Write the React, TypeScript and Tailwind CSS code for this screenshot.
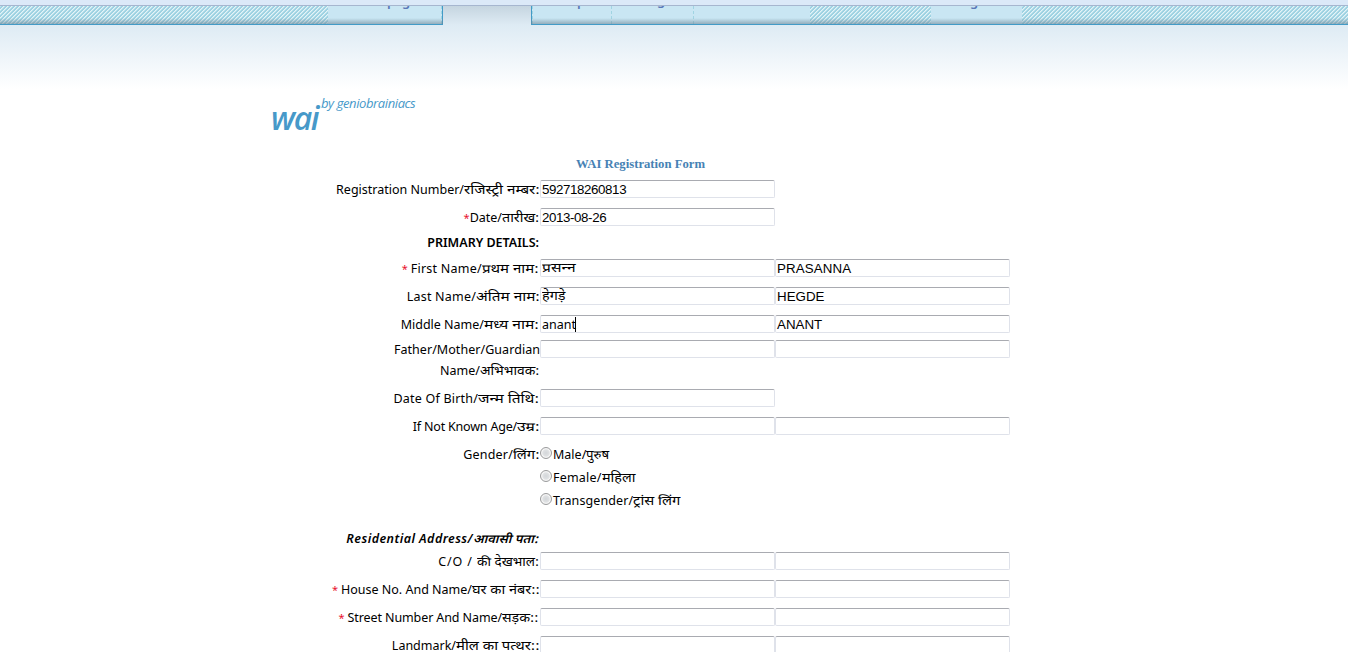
import React from "react";

type Part = { t: string; c?: string; s?: string };

/* Devanagari parts carry a box width (c) and a horizontal stretch (s). */
function Label({ parts, className = "" }: { parts: Part[]; className?: string }) {
  return (
    <span className={`flex whitespace-pre ${className}`}>
      {parts.map((p, i) =>
        p.s ? (
          <span key={i} className={`-mb-[2px] inline-block pt-[2px] ${HI} ${p.c}`}>
            <span className={`inline-block origin-left ${p.s}`}>{p.t}</span>
          </span>
        ) : (
          <span key={i} className={p.c ?? ""}>{p.t}</span>
        )
      )}
    </span>
  );
}

function Field({ value = "", caret = false, className = "", stretch = "" }: { value?: string; caret?: boolean; className?: string; stretch?: string }) {
  return (
    <div className={`flex h-[18px] w-[235px] shrink-0 items-center whitespace-pre rounded-[2px] border border-[#dfe2ea] border-t-[#a9abb1] bg-white pl-px text-black ${className}`}>
      <span className={`inline-block origin-left ${stretch}`}>{value}</span>
      {caret && <span className="-ml-px h-[15px] w-px bg-black" />}
    </div>
  );
}

function Row({ parts, second, children, className = "h-[28px] items-center", label = "" }: { parts: Part[]; second?: Part[]; children?: React.ReactNode; className?: string; label?: string }) {
  return (
    <div className={`flex ${className}`}>
      <div className={`flex w-[540px] shrink-0 flex-col items-end ${label}`}>
        <Label parts={parts} className={second ? "" : "pr-px"} />
        {second && <Label parts={second} className="pr-px" />}
      </div>
      {children}
    </div>
  );
}

const HI = "font-['Noto_Sans_Devanagari','Noto_Sans','Lohit_Devanagari',sans-serif] text-[12px]";
const ARIAL = "font-['Liberation_Sans',Arial,sans-serif] text-[13.33px]";
const DIGITS = `${ARIAL} tracking-[-0.4px]`;
const STAR = "text-[#e8112d] text-[11px]";

function Hatch({ className }: { className: string }) {
  return (
    <svg className={`h-full shrink-0 ${className}`} shapeRendering="crispEdges">
      <defs>
        <pattern id="hatch" width="4" height="4" patternUnits="userSpaceOnUse">
          <rect width="4" height="4" fill="#9ed2e2" />
          <path d="M3 0h1v1h-1zM2 1h1v1h-1zM1 2h1v1h-1zM0 3h1v1h-1z" fill="#e4f4f8" />
          <path d="M0 0h1v1h-1zM3 1h1v1h-1zM2 2h1v1h-1zM1 3h1v1h-1z" fill="#c2e4ee" />
        </pattern>
      </defs>
      <rect width="100%" height="100%" fill="url(#hatch)" />
    </svg>
  );
}

function Cut({ children, className }: { children: string; className: string }) {
  return <span className={`absolute font-['Noto_Sans',sans-serif] text-[13px] leading-[19px] font-semibold text-[#5a78b8] ${className}`}>{children}</span>;
}

function Radio({ parts }: { parts: Part[] }) {
  return (
    <div className="flex h-[23px] items-center">
      <span className="mb-[3px] h-[12px] w-[12px] shrink-0 rounded-full border border-[#9a9b9c] bg-[radial-gradient(circle,#d3d6d9_0,#dfe1e3_45%,#f6f6f6_60%,#e8e8e8_100%)]" />
      <Label parts={parts} className="pl-px" />
    </div>
  );
}

export default function App() {
  return (
    <div className="h-[652px] w-[1348px] overflow-hidden bg-white font-['Noto_Sans',sans-serif] text-[12.5px] leading-[21px] text-black">
      <div className="h-[5px] bg-[#dbe9f8]" />
      <div className="relative flex h-[20px] overflow-hidden border-t border-[#a6b6cf] bg-[#c9e6f3]">
        <div className="relative flex w-[443px] shrink-0 border-r border-b border-[#429bc7]">
          <Hatch className="w-[328px]" />
          <div className="flex-1 border-r border-dashed border-[#a0d4e2]" />
          <Cut className="top-[-14px] left-[387px]">p</Cut>
          <Cut className="top-[-14px] left-[402px]">g</Cut>
        </div>
        <div className="relative z-10 w-[88px] shrink-0 bg-linear-to-b from-[#c5d5e0] to-[#deebf4]" />
        <div className="relative flex flex-1 border-b border-l border-[#429bc7]">
          <div className="w-[80px] border-x border-dashed border-[#a0d4e2]" />
          <div className="w-[82px] border-r border-dashed border-[#a0d4e2]" />
          <div className="w-[116px]" />
          <Hatch className="w-[121px]" />
          <div className="w-[91px]" />
          <Hatch className="w-[326px]" />
          <Cut className="top-[-14px] left-[45px]">p</Cut>
          <Cut className="top-[-15px] left-[125px]">g</Cut>
          <Cut className="top-[-14px] left-[438px]">g</Cut>
        </div>
        <div className="absolute inset-x-0 bottom-px h-[6px] bg-linear-to-b from-transparent to-[#6f8798]/60" />
      </div>
      <div className="h-[150px] bg-linear-to-b from-[#deebf4] to-white to-[64px] pt-[67px] pl-[271px]">
        <div className="flex items-start font-['Open_Sans',sans-serif] text-[#4799c9] italic">
          <span className="w-[50px] text-[32px] leading-[51px] font-semibold tracking-[-1.4px]">wai</span>
          <span className="pt-px text-[13px] leading-[20px] tracking-[-0.4px]">by geniobrainiacs</span>
        </div>
        <h1 className="mt-[11px] ml-[305px] font-['Liberation_Serif',serif] text-[12.7px] leading-[20px] font-bold text-[#4682b4]">WAI Registration Form</h1>
      </div>

      <Row parts={[{ t: "Registration Number/" }, { t: "रजिस्ट्री नम्बर:", c: "w-[75px]", s: "scale-x-[1.27]" }]}><Field className={DIGITS} value="592718260813" /></Row>
      <Row parts={[{ t: "*", c: STAR }, { t: "Date/" }, { t: "तारीख:", c: "w-[37px]", s: "scale-x-[1.19]" }]}><Field className={DIGITS} value="2013-08-26" /></Row>
      <Row className="h-[23px] items-center font-semibold" parts={[{ t: "PRIMARY DETAILS:" }]} />
      <Row parts={[{ t: "* ", c: STAR }, { t: "First Name/", c: "tracking-[0.25px]" }, { t: "प्रथम नाम:", c: "w-[57px]", s: "scale-x-[1.25]" }]}><Field className={HI} stretch="scale-x-[1.3] pt-[3px]" value="प्रसन्‍न" /><Field className={`${ARIAL} tracking-[0.1px]`} value="PRASANNA" /></Row>
      <Row parts={[{ t: "Last Name/", c: "tracking-[0.2px]" }, { t: "अंतिम नाम:", c: "w-[63px]", s: "scale-x-[1.28]" }]}><Field className={HI} stretch="scale-x-[1.2] pt-[3px]" value="हेगड़े" /><Field className={ARIAL} value="HEGDE" /></Row>
      <Row parts={[{ t: "Middle Name/" }, { t: "मध्य नाम:", c: "w-[55px]", s: "scale-x-[1.3]" }]}><Field value="anant" caret /><Field className={ARIAL} value="ANANT" /></Row>
      <Row className="h-[46px] items-start pt-[2px]" label="mt-[-1px]" parts={[{ t: "Father/Mother/Guardian", c: "tracking-[0.05px]" }]} second={[{ t: "Name/" }, { t: "अभिभावक:", c: "w-[59px]", s: "scale-x-[1.15]" }]}><Field /><Field /></Row>
      <Row parts={[{ t: "Date Of Birth/", c: "tracking-[0.2px]" }, { t: "जन्म तिथि:", c: "w-[61px]", s: "scale-x-[1.29]" }]}><Field /></Row>
      <Row parts={[{ t: "If Not Known Age/", c: "tracking-[-0.2px]" }, { t: "उम्र:", c: "w-[22px]", s: "scale-x-[1.3]" }]}><Field /><Field /></Row>
      <Row className="h-[88px] items-start pt-[3px]" label="pt-px" parts={[{ t: "Gender/", c: "tracking-[0.2px]" }, { t: "लिंग:", c: "w-[26px]", s: "scale-x-[1.23]" }]}>
        <div>
          <Radio parts={[{ t: "Male/" }, { t: "पुरुष", c: "w-[24px]", s: "scale-x-[1.1]" }]} />
          <Radio parts={[{ t: "Female/", c: "tracking-[0.2px]" }, { t: "महिला", c: "w-[34px]", s: "scale-x-[1.2]" }]} />
          <Radio parts={[{ t: "Transgender/", c: "tracking-[0.1px]" }, { t: "ट्रांस लिंग", c: "w-[48px]", s: "scale-x-[1.23]" }]} />
        </div>
      </Row>
      <Row className="h-[19px] items-center font-semibold italic" label="pt-px" parts={[{ t: "Residential Address/", c: "tracking-[0.45px]" }, { t: "आवासी पता:", c: "w-[66px]", s: "scale-x-[1.08]" }]} />
      <Row parts={[{ t: "C/O / ", c: "tracking-[0.9px]" }, { t: "की देखभाल:", c: "w-[62px]", s: "scale-x-[1.13]" }]}><Field /><Field /></Row>
      <Row parts={[{ t: "* ", c: STAR }, { t: "House No. And Name/" }, { t: "घर का नंबर::", c: "w-[67px]", s: "scale-x-[1.21]" }]}><Field /><Field /></Row>
      <Row parts={[{ t: "* ", c: STAR }, { t: "Street Number And Name/", c: "tracking-[-0.1px]" }, { t: "सड़क::", c: "w-[37px]", s: "scale-x-[1.18]" }]}><Field /><Field /></Row>
      <Row parts={[{ t: "Landmark/" }, { t: "मील का पत्थर::", c: "w-[83px]", s: "scale-x-[1.24]" }]}><Field /><Field /></Row>
    </div>
  );
}
